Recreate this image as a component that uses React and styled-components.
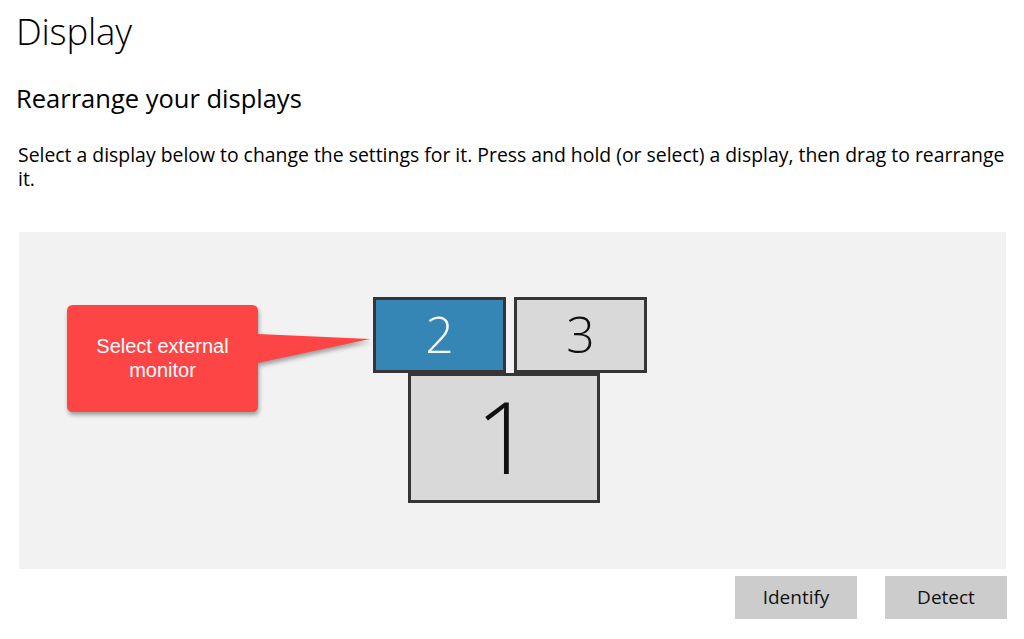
import React from "react";
import styled, { createGlobalStyle } from "styled-components";

const GlobalStyle = createGlobalStyle`
  html, body { margin: 0; padding: 0; background: #ffffff; }
  body { font-family: "Open Sans", "Noto Sans", sans-serif; color: #000; }
`;

const Page = styled.div`
  width: 1024px;
  height: 639px;
  overflow: hidden;
  padding: 0 0 0 16px;
  box-sizing: border-box;
`;

const Title = styled.h1`
  margin: 0;
  padding-top: 7px;
  font-size: 36.5px;
  font-weight: 300;
  line-height: 48px;
  letter-spacing: -0.2px;
`;

const Subtitle = styled.h2`
  margin: 0;
  padding-top: 27px;
  font-size: 25.5px;
  font-weight: 400;
  line-height: 32px;
`;

const Description = styled.p`
  margin: 0;
  padding-top: 29px;
  padding-left: 2px;
  width: 1000px;
  font-size: 19.4px;
  line-height: 24px;
`;

const Arrangement = styled.div`
  position: relative;
  margin-top: 41px;
  margin-left: 3px;
  width: 987px;
  height: 337px;
  background: #f2f2f2;
`;

const Monitor = styled.div`
  position: absolute;
  box-sizing: border-box;
  display: flex;
  align-items: center;
  justify-content: center;
  border: 3px solid #353535;
  background: ${(p) => (p.$selected ? "#3585b5" : "#d9d9d9")};
  color: ${(p) => (p.$selected ? "#f4f8fb" : "#111")};
  font-weight: 300;
  font-size: ${(p) => p.$size}px;
  line-height: 1;
  padding-bottom: ${(p) => Math.round(p.$size * 0.06)}px;
`;

const Callout = styled.div`
  position: absolute;
  left: 48px;
  top: 73px;
  width: 320px;
  height: 120px;
`;

const CalloutShape = styled.svg`
  position: absolute;
  left: 0;
  top: 0;
  overflow: visible;
  filter: drop-shadow(1px 3px 2px rgba(0, 0, 0, 0.35));
`;

const CalloutText = styled.div`
  position: relative;
  width: 191px;
  padding-top: 29px;
  text-align: center;
  font-family: "Liberation Sans", Arial, sans-serif;
  font-size: 20px;
  line-height: 24px;
  color: #ffffff;
`;

const ButtonRow = styled.div`
  display: flex;
  justify-content: flex-end;
  gap: 28px;
  width: 991px;
  margin-top: 7px;
`;

const Button = styled.button`
  width: 122px;
  height: 43px;
  border: none;
  background: #cccccc;
  font-family: "Open Sans", "Noto Sans", sans-serif;
  font-size: 19px;
  color: #111;
  padding: 0 0 2px;
  cursor: pointer;
`;

const monitors = [
  { id: 2, left: 354, top: 65, w: 133, h: 76, size: 50, selected: true },
  { id: 3, left: 495, top: 65, w: 133, h: 76, size: 50 },
  { id: 1, left: 389, top: 141, w: 192, h: 130, size: 100 },
];

export default function App() {
  return (
    <>
      <GlobalStyle />
      <Page>
        <Title>Display</Title>
        <Subtitle>Rearrange your displays</Subtitle>
        <Description>
          Select a display below to change the settings for it. Press and hold
          (or select) a display, then drag to rearrange it.
        </Description>
        <Arrangement>
          {monitors.map((m) => (
            <Monitor
              key={m.id}
              $selected={m.selected}
              $size={m.size}
              style={{ left: m.left, top: m.top, width: m.w, height: m.h }}
            >
              {m.id}
            </Monitor>
          ))}
          <Callout>
            <CalloutShape width="320" height="120" viewBox="0 0 320 120">
              <path
                d="M6 0 H185 Q191 0 191 6 V29 L303 34 L191 58 V101 Q191 107 185 107 H6 Q0 107 0 101 V6 Q0 0 6 0 Z"
                fill="#fe4545"
              />
            </CalloutShape>
            <CalloutText>
              Select external
              <br />
              monitor
            </CalloutText>
          </Callout>
        </Arrangement>
        <ButtonRow>
          <Button>Identify</Button>
          <Button>Detect</Button>
        </ButtonRow>
      </Page>
    </>
  );
}
